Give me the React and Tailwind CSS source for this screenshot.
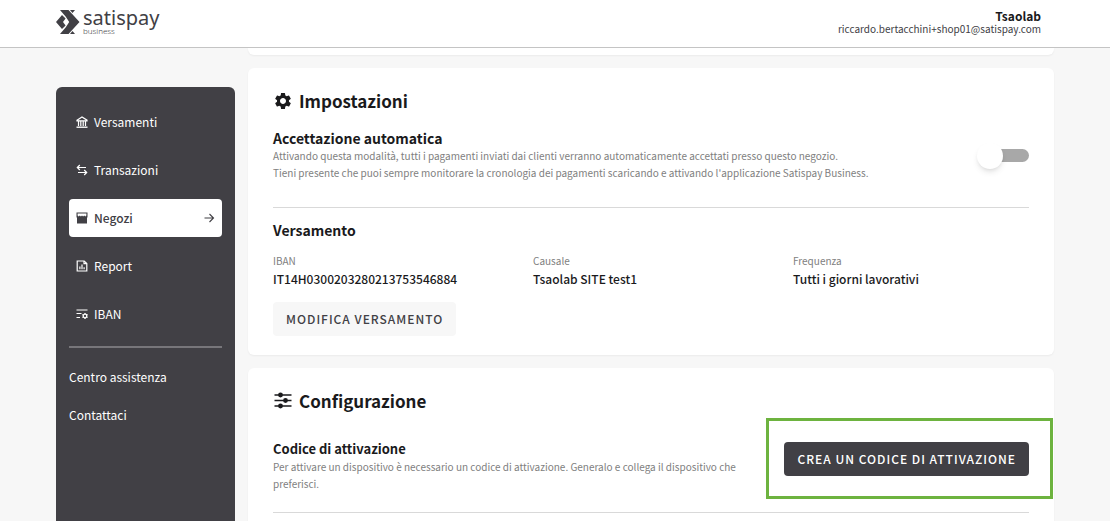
import { useState } from 'react'
import { MdSettings } from 'react-icons/md'

const BankIcon = () => (
    <svg viewBox="0 0 12 12" className="w-3 h-3" fill="none" stroke="currentColor">
        <path d="M1 4.2 6 1l5 3.2v.6H1z" strokeWidth="1.2" />
        <path d="M2.5 5v5M4.8 5v5M7.2 5v5M9.5 5v5" strokeWidth="1.2" />
        <path d="M.5 11.2h11" strokeWidth="1.4" />
    </svg>
)

const SwapIcon = () => (
    <svg viewBox="0 0 12 12" className="w-3 h-3" fill="none" stroke="currentColor" strokeWidth="1.2">
        <path d="M10 3.5H1.5M3.8 1 1.3 3.5 3.8 6" />
        <path d="M2 8.5h8.5M8.2 6l2.5 2.5L8.2 11" />
    </svg>
)

const StoreIcon = () => (
    <svg viewBox="0 0 12 12" className="w-3 h-3" fill="currentColor">
        <path fillRule="evenodd" d="M.5.5h11v4.7l-.5.6v5.7H1V5.8l-.5-.6zM1.600 1.600v2l1.100.9 1.100-.9 1.100.9L6 3.600l1.100.9 1.100-.9 1.100.9 1.100-.9v-2z" />
    </svg>
)

const ReportIcon = () => (
    <svg viewBox="0 0 12 12" className="w-3 h-3" fill="none" stroke="currentColor" strokeWidth="1.2">
        <path d="M1.2 1h7l2.6 2.6V11H1.2z" />
        <path d="M8 1v2.7h2.7" />
        <path d="M3.9 9.3V6.5M6 9.3V4.5M8.1 9.3V7.3" />
    </svg>
)

const IbanIcon = () => (
    <svg viewBox="0 0 12 12" className="w-3 h-3" fill="none" stroke="currentColor" strokeWidth="1.2">
        <path d="M.5 2h11M.5 5.5h5M.5 9.5h3.5" />
        <circle cx="9" cy="8" r="1.8" strokeWidth="1.3" />
        <path d="M9 5v1M9 10v1M6.4 6.5l.9.5M10.7 9l.9.5M6.4 9.5l.9-.5M10.7 7l.9-.5" />
    </svg>
)

const SlidersIcon = () => (
    <svg viewBox="0 0 20 20" className="w-5 h-5" fill="currentColor">
        <path d="M1.5 4h17M1.5 9.500h17M1.5 15h17" stroke="currentColor" strokeWidth="1.6" />
        <circle cx="7.5" cy="4" r="2.4" />
        <circle cx="12.5" cy="9.5" r="2.4" />
        <circle cx="7.5" cy="15" r="2.4" />
    </svg>
)

const ArrowIcon = () => (
    <svg viewBox="0 0 12 12" className="w-3 h-3 ml-auto" fill="none" stroke="currentColor" strokeWidth="1.1">
        <path d="M1.5 6h9M6.5 2l4 4-4 4" />
    </svg>
)

const Logo = () => (
    <a href="#" className="flex items-start gap-[3px] text-[#414045]">
        <svg viewBox="0 0 24 24" className="w-6 h-6 mt-0.5" fill="currentColor">
            <path d="M4 0h8.500L23.500 12 12.500 24H4L9.800 17.200 13.200 12 9.800 6.800z" />
            <path d="M14 0h5L16.500 2.900zM14 24h5L16.500 21.100z" />
            <path d="M6 5 9.600 8.600 7 12l2.600 3.400L6 19 0 12z" />
        </svg>
        <span className="flex flex-col font-['Noto_Sans',sans-serif]">
            <span className="text-[20px] leading-5">satispay</span>
            <span className="text-[8px] leading-[6px] font-light">business</span>
        </span>
    </a>
)

const menu = [
    { label: 'Versamenti', icon: BankIcon },
    { label: 'Transazioni', icon: SwapIcon },
    { label: 'Negozi', icon: StoreIcon, active: true },
    { label: 'Report', icon: ReportIcon },
    { label: 'IBAN', icon: IbanIcon },
]

const details = [
    { label: 'IBAN', value: 'IT14H0300203280213753546884' },
    { label: 'Causale', value: 'Tsaolab SITE test1' },
    { label: 'Frequenza', value: 'Tutti i giorni lavorativi' },
]

export default function App() {
    const [autoAccept, setAutoAccept] = useState(false)

    return (
        <div className="flex flex-col h-screen overflow-hidden bg-[#f7f7f7] text-[#1a1a1c] font-['Noto_Sans_CJK_SC',sans-serif]">
            <header className="shrink-0 flex justify-between items-start h-12 px-14 pt-2 bg-white border-b border-[#c4c4c4]">
                <Logo />
                <div className="pr-[13px] text-right">
                    <p className="text-[12px] leading-[15px] font-bold">Tsaolab</p>
                    <p className="text-[10px] leading-3 text-[#414045]">riccardo.bertacchini+shop01@satispay.com</p>
                </div>
            </header>

            <div className="flex-1 min-h-0 flex gap-[13px] px-14">
                {/* Sidebar */}
                <aside className="shrink-0 w-[179px] mt-[39px] px-[13px] pt-4 rounded-t-md bg-[#414045] text-white text-[12px]">
                    <nav className="flex flex-col gap-[10px]">
                        {menu.map(({ label, icon: Icon, active }) => (
                            <a
                                key={label}
                                href="#"
                                className={`flex items-center h-[38px] px-[7px] gap-[6px] rounded ${active
                                    ? 'bg-white text-[#414045] font-medium'
                                    : ''
                                    }`}
                            >
                                <Icon />
                                {label}
                                {active && <ArrowIcon />}
                            </a>
                        ))}
                    </nav>
                    <hr className="mt-[13px] mb-[10px] border-t-2 border-[#77767a]" />
                    <a href="#" className="flex items-center h-[38px]">Centro assistenza</a>
                    <a href="#" className="flex items-center h-[38px]">Contattaci</a>
                </aside>

                {/* Content */}
                <main className="flex-1 min-w-0 flex flex-col">
                    <div className="shrink-0 h-[7px] rounded-b-md bg-white shadow-xs"></div>

                    <section className="shrink-0 mt-[13px] px-[25px] pt-[21px] pb-[19px] rounded-md bg-white shadow-xs">
                        <h2 className="flex items-center gap-[6px] text-[17px] leading-6 font-bold">
                            <MdSettings className="w-5 h-5" />
                            Impostazioni
                        </h2>
                        <div className="flex items-center justify-between mt-4">
                            <div>
                                <label htmlFor="auto-accept" className="block text-[14px] leading-[18px] font-bold">Accettazione automatica</label>
                                <p className="text-[10px] leading-[17px] text-[#808080]">
                                    Attivando questa modalità, tutti i pagamenti inviati dai clienti verranno automaticamente accettati presso questo negozio.
                                    <br />
                                    Tieni presente che puoi sempre monitorare la cronologia dei pagamenti scaricando e attivando l'applicazione Satispay Business.
                                </p>
                            </div>
                            <input
                                id="auto-accept"
                                type="checkbox"
                                role="switch"
                                checked={autoAccept}
                                onChange={(e) => setAutoAccept(e.target.checked)}
                                className="appearance-none relative w-11 h-[13px] rounded-full bg-[#a8a8a8] checked:bg-[#6db33f] cursor-pointer before:absolute before:-top-1.5 before:-left-2 before:w-[26px] before:h-[26px] before:rounded-full before:bg-white before:shadow-md checked:before:left-6"
                            />
                        </div>
                        <hr className="mt-[26px] mb-3 border-[#d9d9d9]" />
                        <h3 className="text-[14px] leading-5 font-bold">Versamento</h3>
                        <dl className="grid grid-cols-3 gap-6 mt-3">
                            {details.map((item) => (
                                <div key={item.label}>
                                    <dt className="text-[10px] leading-[17px] text-[#808080]">{item.label}</dt>
                                    <dd className="text-[12px] leading-5 font-medium">{item.value}</dd>
                                </div>
                            ))}
                        </dl>
                        <button className="mt-[13px] h-[34px] px-[13px] rounded bg-[#f7f7f7] text-[#414045] text-[12px] font-medium tracking-[1px]">
                            MODIFICA VERSAMENTO
                        </button>
                    </section>

                    <section className="shrink-0 mt-[13px] px-[25px] pt-[21px] pb-6 rounded-md bg-white shadow-xs">
                        <h2 className="flex items-center gap-[6px] text-[17px] leading-6 font-bold">
                            <SlidersIcon />
                            Configurazione
                        </h2>
                        <div className="flex items-start justify-between gap-8 mt-[27px]">
                            <div>
                                <h3 className="text-[13px] leading-[18px] font-bold">Codice di attivazione</h3>
                                <p className="text-[10px] leading-[17px] text-[#808080]">
                                    Per attivare un dispositivo è necessario un codice di attivazione. Generalo e collega il dispositivo che preferisci.
                                </p>
                            </div>
                            <div className="relative shrink-0 mt-0.5">
                                <button className="h-[34px] px-[13px] rounded bg-[#414045] text-white text-[12px] font-medium tracking-[1px]">
                                    CREA UN CODICE DI ATTIVAZIONE
                                </button>
                                {/* highlight */}
                                <span className="absolute -top-6 -bottom-[23px] -left-[18px] -right-6 border-3 border-[#6db33f] pointer-events-none"></span>
                            </div>
                        </div>
                        <hr className="mt-5 border-[#d9d9d9]" />
                    </section>
                </main>
            </div>
        </div>
    )
}
